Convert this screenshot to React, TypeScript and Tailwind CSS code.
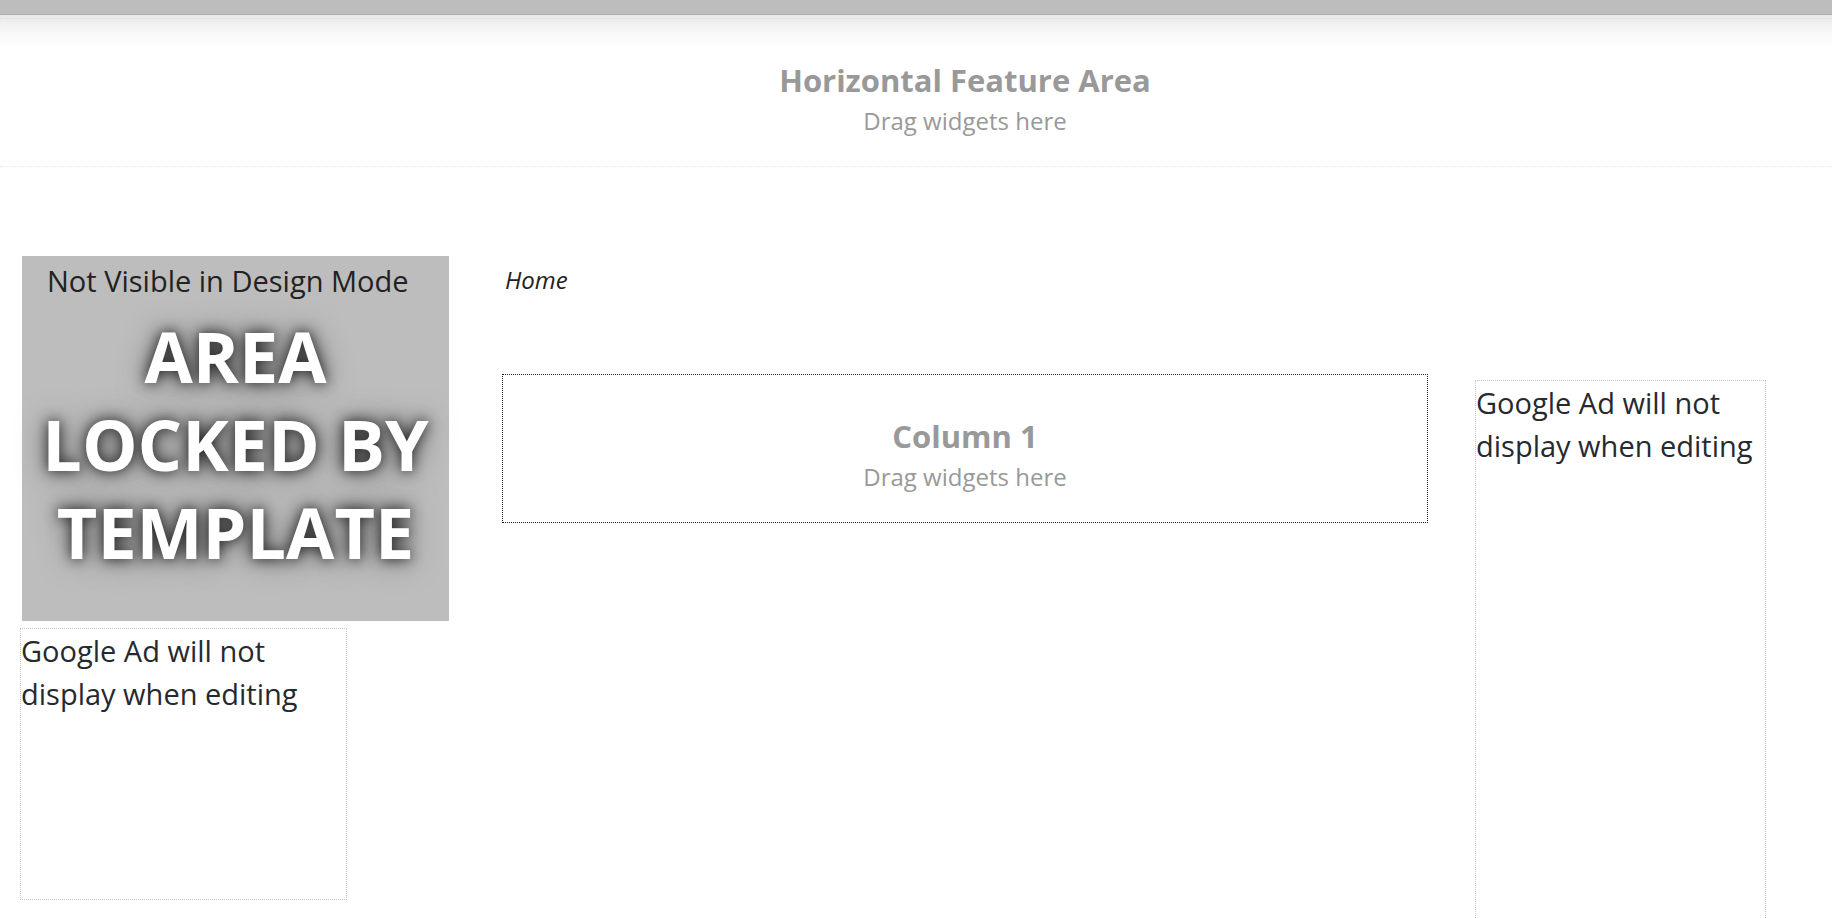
import React from "react";

function DropZone({ title }: { title: string }) {
  return (
    <div className="pt-[44px] pb-[30px] text-center text-[#999999]">
      <div className="text-[31px] leading-[34px] font-bold">{title}</div>
      <div className="mt-[9px] text-[24px] leading-[30px]">Drag widgets here</div>
    </div>
  );
}

function AdBox({ className }: { className: string }) {
  return (
    <div className={"border border-dotted border-[#c8c8c8] text-[29px] leading-[43px] text-[#262a2f] " + className}>
      Google Ad will not display when editing
    </div>
  );
}

export default function App() {
  return (
    <div
      className="h-[918px] w-full overflow-hidden bg-white"
      style={{ fontFamily: '"Open Sans", "Noto Sans", sans-serif' }}
    >
      <div className="h-[15px] bg-[#bdbdbd] border-b border-[#b0b0b0]" />
      <div className="bg-[linear-gradient(to_bottom,#e9e9e9_0px,#f8f8f8_18px,#ffffff_32px)]">
        <div className="pt-[3px]">
          <div className="border-t border-dotted border-[#dcdcdc]" />
        </div>
        <div className="flex pl-[22px]">
          <div className="w-[427px] shrink-0" />
          <div className="ml-[53px] w-[926px] shrink-0">
            <DropZone title="Horizontal Feature Area" />
          </div>
        </div>
        <div className="border-b border-dotted border-[#e6e6e6]" />
      </div>

      <div className="flex items-start pl-[22px] pt-[89px]">
        <div className="w-[427px] shrink-0">
          <div className="h-[365px] bg-[#bdbdbd] pt-[4px]">
            <div className="pl-[25px] text-[29px] leading-[42px] text-[#222222]">
              Not Visible in Design Mode
            </div>
            <div className="mt-[10px] text-center text-[70px] leading-[88px] font-bold text-white [text-shadow:0_0_14px_rgba(0,0,0,0.85),0_0_30px_rgba(0,0,0,0.5)]">
              AREA
              <br />
              LOCKED BY
              <br />
              TEMPLATE
            </div>
          </div>
          <AdBox className="mt-[7px] ml-[-2px] w-[327px] h-[272px]" />
        </div>

        <div className="ml-[53px] w-[926px] shrink-0">
          <div className="mt-[7px] ml-[3px] text-[24px] leading-[34px] italic text-[#222222]">Home</div>
          <div className="mt-[77px] border border-dotted border-[#222222]">
            <DropZone title="Column 1" />
          </div>
        </div>

        <div className="ml-[47px] w-[291px] shrink-0">
          <AdBox className="mt-[124px] w-[291px] h-[620px]" />
        </div>
      </div>
    </div>
  );
}
